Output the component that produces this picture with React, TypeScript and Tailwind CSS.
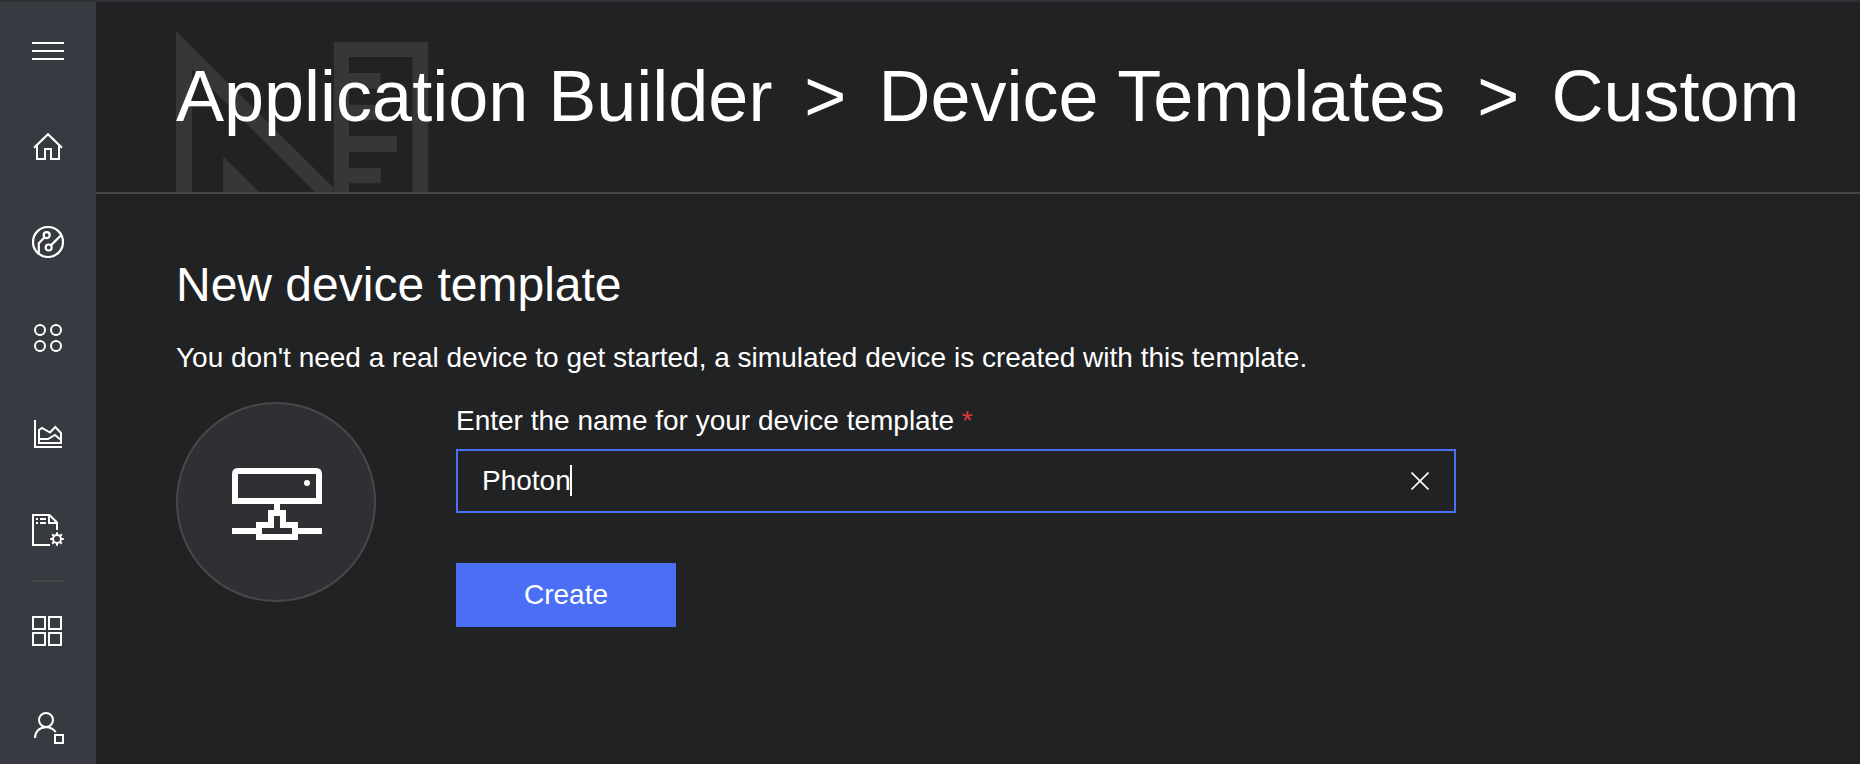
import { useState, type ReactNode } from "react";

function Icon({ children }: { children: ReactNode }) {
  return (
    <svg
      className="size-8"
      viewBox="0 0 32 32"
      fill="none"
      stroke="currentColor"
      strokeWidth="2"
      aria-hidden="true"
    >
      {children}
    </svg>
  );
}

const gearTeeth = [0, 45, 90, 135, 180, 225, 270, 315];

const mainItems: { label: string; icon: ReactNode }[] = [
  { label: "Menu", icon: <path d="M0 9H32M0 17H32M0 25H32" /> },
  {
    label: "Home",
    icon: (
      <>
        <path d="M2 17.7L16 4.3L30 17.7" strokeWidth="2.2" />
        <path d="M5 15V29H13V19H19V29H27V15" />
      </>
    ),
  },
  {
    label: "Devices",
    icon: (
      <g strokeWidth="2.2">
        <circle cx="16" cy="16" r="15" />
        <circle cx="14.7" cy="9.2" r="3" />
        <circle cx="16.7" cy="21.5" r="3" />
        <path d="M18.8 19.4L29.4 9M12.6 11.3L6.8 17.2V27.6" />
      </g>
    ),
  },
  {
    label: "Device sets",
    icon: (
      <>
        <circle cx="8" cy="8" r="5" />
        <circle cx="24" cy="8" r="5" />
        <circle cx="8" cy="24" r="5" />
        <circle cx="24" cy="24" r="5" />
      </>
    ),
  },
  {
    label: "Analytics",
    icon: (
      <>
        <path d="M3 2V29H30" />
        <path d="M7 25V12L10 10L18 14.5L23.3 9L29 15V25Z" />
        <path d="M7 21H16L23 17L29 22" />
      </>
    ),
  },
  {
    label: "Jobs",
    icon: (
      <>
        <path d="M18 31H1V1H17.5L25 8.5V16" />
        <path d="M17 1V9H25" />
        <path d="M4 5H6M8 5H14M4 9H6M8 9H14" />
        <circle cx="25" cy="25" r="4" />
        {gearTeeth.map((angle) => (
          <path key={angle} d="M25 21V18.2" transform={`rotate(${angle} 25 25)`} />
        ))}
      </>
    ),
  },
];

const lowerItems: { label: string; icon: ReactNode }[] = [
  {
    label: "Application Builder",
    icon: <path d="M1 1H13V13H1ZM17 1H29V13H17ZM1 17H13V29H1ZM17 17H29V29H17Z" />,
  },
  {
    label: "Administration",
    icon: (
      <>
        <circle cx="14" cy="8" r="7" />
        <path d="M3 26C3 19.5 7.5 15.2 14 15.2C18 15.2 21.5 17 23.8 20.2" />
        <path d="M23 23H31V31H23Z" />
      </>
    ),
  },
];

function NavButton({ label, icon }: { label: string; icon: ReactNode }) {
  return (
    <button type="button" aria-label={label} className="flex h-24 w-full shrink-0 items-center justify-center">
      <Icon>{icon}</Icon>
    </button>
  );
}

function BuilderArt() {
  return (
    <svg
      className="absolute bottom-0 left-20 h-[161px] w-[252px] text-[#363739]"
      viewBox="0 0 252 161"
      fill="currentColor"
      aria-hidden="true"
    >
      <path d="M0 0L157.7 156.7V161H139L16 38V161H0Z" />
      <path d="M157.7 11H252V161H236.3V26H173V42H204.7V57.7H173V73.7H204.7V89.3H173V105H220.7V121H173V136.7H204.7V152.3H173V161H157.7Z" />
      <path d="M47.3 125.5V161H83Z" />
    </svg>
  );
}

export default function App() {
  const [name, setName] = useState("Photon");

  return (
    <div className="flex h-screen overflow-hidden border-t-2 border-[#303134] bg-[#212224] font-['Liberation_Sans',Arial,sans-serif] text-[28px] leading-[38px] text-white">
      <nav aria-label="Main" className="flex w-24 shrink-0 flex-col overflow-hidden bg-[#373a41]">
        {mainItems.map((item) => (
          <NavButton key={item.label} {...item} />
        ))}
        <hr className="mx-8 my-0.5 border-t-2 border-[#484644]" />
        {lowerItems.map((item) => (
          <NavButton key={item.label} {...item} />
        ))}
      </nav>

      <div className="min-w-0 grow">
        <header className="relative flex h-48 items-center border-b-2 border-[#48484a] px-20 pb-0.5">
          <BuilderArt />
          <h1 className="relative flex gap-8 text-[72px] leading-[80px] whitespace-nowrap">
            <span>Application Builder</span>
            <span>&gt;</span>
            <span>Device Templates</span>
            <span>&gt;</span>
            <span>Custom</span>
          </h1>
        </header>

        <main className="px-20 pt-[61px]">
          <h2 className="text-[48px] leading-[60px]">New device template</h2>
          <p className="mt-6">
            You don't need a real device to get started, a simulated device is created with this template.
          </p>

          <div className="mt-[25px] flex gap-20">
            <div className="flex size-[200px] shrink-0 items-center justify-center rounded-full border-2 border-[#484848] bg-[#2f3034] pt-1 pl-0.5">
              <svg className="h-[72px] w-[90px]" viewBox="0 0 90 72" fill="none" stroke="currentColor" strokeWidth="6" aria-hidden="true">
                <path d="M3 33V6Q3 3 6 3H84Q87 3 87 6V33Z" />
                <circle cx="75" cy="15" r="3" fill="currentColor" stroke="none" />
                <path d="M45 36V45M39 45H51V57H63V69H27V57H39ZM0 63H27M63 63H90" />
              </svg>
            </div>

            <form className="w-full max-w-[1000px]" onSubmit={(event) => event.preventDefault()}>
              <label htmlFor="template-name" className="block">
                Enter the name for your device template <span className="text-[#dc3a36]">*</span>
              </label>
              <div className="relative mt-[9px] flex h-16 items-center border-2 border-[#4a6ff5]">
                <input
                  id="template-name"
                  type="text"
                  required
                  value={name}
                  onChange={(event) => setName(event.target.value)}
                  className="h-full min-w-0 grow bg-transparent pl-6 caret-transparent outline-none"
                />
                <span className="absolute top-[14px] left-[112px] h-[31px] w-0.5 bg-white" />
                <button
                  type="button"
                  aria-label="Clear"
                  onClick={() => setName("")}
                  className="flex h-full w-[68px] shrink-0 items-center justify-center"
                >
                  <svg className="size-[18px]" viewBox="0 0 18 18" stroke="currentColor" strokeWidth="1.6" aria-hidden="true">
                    <path d="M0.5 0.5L17.5 17.5M17.5 0.5L0.5 17.5" />
                  </svg>
                </button>
              </div>
              <button type="submit" className="mt-[50px] h-16 w-[220px] bg-[#4a6ff5]">
                Create
              </button>
            </form>
          </div>
        </main>
      </div>
    </div>
  );
}
